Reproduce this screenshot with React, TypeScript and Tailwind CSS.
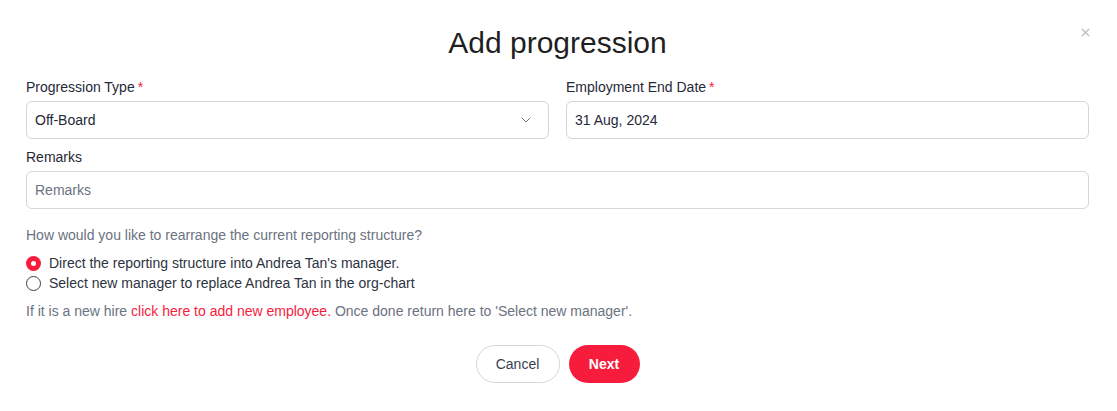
import { ChevronDown, X } from "lucide-react";

function Label({ text, required }: { text: string; required?: boolean }) {
  return (
    <label className="mb-[5px] block text-[14px] leading-[17px] text-[#1f2937]">
      {text}
      {required ? <span className="ml-[3px] text-[#f81c3c]">*</span> : null}
    </label>
  );
}

export default function App() {
  return (
    <div className="relative h-[411px] w-[1117px] bg-white font-['Liberation_Sans',Arial,sans-serif]">
      <button
        type="button"
        className="absolute right-[25px] top-[26px] text-[#c4c4c4]"
      >
        <X size={13} strokeWidth={3} />
      </button>

      <div className="pl-[26px] pr-[28px] pt-[25px]">
        <h1 className="text-center text-[30px] leading-[36px] text-[#1f1f1f]">
          Add progression
        </h1>

        <div className="mt-[18px] grid grid-cols-2 gap-[17px]">
          <div>
            <Label text="Progression Type" required />
            <div className="flex h-[38px] items-center justify-between rounded-[6px] border border-[#d4d6dd] pl-[8px] pr-[14px] text-[14px] text-[#1f2937]">
              <span>Off-Board</span>
              <ChevronDown size={16} strokeWidth={1.5} className="text-[#6b7280]" />
            </div>
          </div>
          <div>
            <Label text="Employment End Date" required />
            <div className="flex h-[38px] items-center rounded-[6px] border border-[#d4d6dd] px-[8px] text-[14px] text-[#1f2937]">
              31 Aug, 2024
            </div>
          </div>
        </div>

        <div className="mt-[10px]">
          <Label text="Remarks" />
          <div className="flex h-[38px] items-center rounded-[6px] border border-[#d4d6dd] px-[8px] text-[14px] text-[#6b7280]">
            Remarks
          </div>
        </div>

        <p className="mt-[18px] text-[14px] leading-[17px] text-[#6b7280]">
          How would you like to rearrange the current reporting structure?
        </p>

        <div className="mt-[11px] flex flex-col gap-[3px] text-[14px] leading-[17px] text-[#2d3340]">
          <div className="flex items-center gap-[8px]">
            <span className="flex h-[15px] w-[15px] items-center justify-center rounded-full bg-[#f81c3c]">
              <span className="h-[5px] w-[5px] rounded-full bg-white" />
            </span>
            <span>Direct the reporting structure into Andrea Tan's manager.</span>
          </div>
          <div className="flex items-center gap-[8px]">
            <span className="h-[15px] w-[15px] rounded-full border border-[#3f3f46]" />
            <span>Select new manager to replace Andrea Tan in the org-chart</span>
          </div>
        </div>

        <p className="mt-[11px] text-[14px] leading-[17px] text-[#6b7280]">
          If it is a new hire{" "}
          <span className="text-[#f81c3c]">click here to add new employee.</span>{" "}
          Once done return here to 'Select new manager'.
        </p>

        <div className="mt-[25px] flex justify-center gap-[9px]">
          <button
            type="button"
            className="h-[38px] w-[84px] rounded-full border border-[#d4d6dd] text-[14px] text-[#374151]"
          >
            Cancel
          </button>
          <button
            type="button"
            className="h-[38px] w-[71px] rounded-full bg-[#f81c3c] text-[14px] font-bold text-white"
          >
            Next
          </button>
        </div>
      </div>
    </div>
  );
}
